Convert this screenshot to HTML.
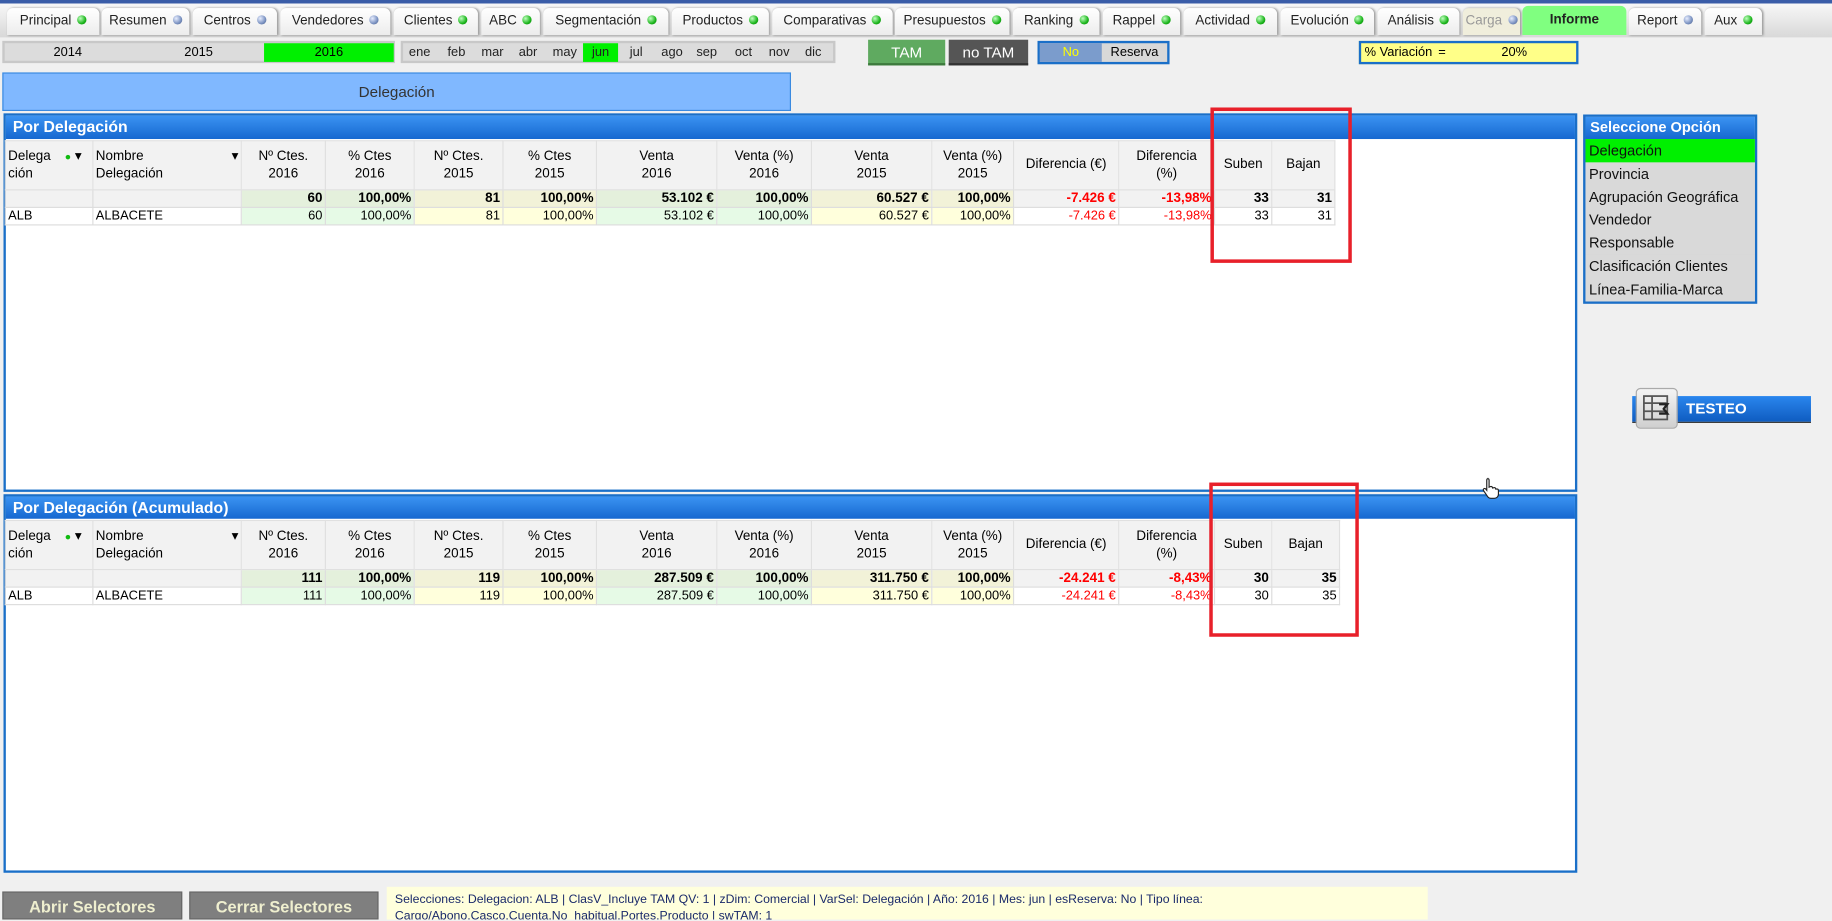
<!DOCTYPE html>
<html><head><meta charset="utf-8"><style>
html,body{margin:0;padding:0;width:1832px;height:919px;overflow:hidden;background:#f0f0f0}
#w{position:absolute;left:0;top:0;width:1568px;height:787px;transform:scale(1.16837);transform-origin:0 0;font-family:"Liberation Sans",sans-serif;font-size:11.5px;color:#000}
.a{position:absolute;box-sizing:border-box}
.tab{position:absolute;top:7px;height:23px;background:linear-gradient(#fff,#ececec);border-radius:5px 5px 0 0;box-shadow:1px 0 2px #999;font-size:11.5px;line-height:22px;text-align:center;color:#222;white-space:nowrap}
.dot{display:inline-block;width:8px;height:8px;border-radius:50%;background:radial-gradient(circle at 35% 35%,#bfffbf,#1bb51b 60%,#0a7a0a);margin-left:5px;vertical-align:-0px}
.dot.b{background:radial-gradient(circle at 35% 35%,#e8eeff,#7890c0 60%,#4a5a80)}
.hdr{position:absolute;background:linear-gradient(#3b93f2,#1668d0);color:#fff;font-weight:bold;font-size:13.5px;line-height:19px;padding-left:6px;box-sizing:border-box}
table{border-collapse:collapse;position:absolute;table-layout:fixed}
td{border:1px solid #ddd;padding:0 2px;font-size:11.5px;white-space:nowrap;overflow:hidden}
.th td{background:#f2f2f2;text-align:center;height:41px;line-height:15px;border-color:#e0e0e0}
.th td.l{text-align:left}
.tot td{height:14px;font-weight:bold;text-align:right;background:#f2f2f2}
.row td{height:14px;text-align:right;background:#fff;font-size:11px}
.tot .g{background:#e4f0dc}.tot .y{background:#f2f2d8}
.row .g{background:#e6fae6}.row .y{background:#ffffdc}
.r{color:#f00}
.red{position:absolute;border:3px solid #e8202a;box-sizing:border-box}
.opt{height:19.8px;line-height:20px;padding-left:3px;font-size:12.5px;background:#d9d9d9;color:#111;white-space:nowrap}
.mo{position:absolute;top:0;line-height:16px;font-size:11px;color:#222}
</style></head><body><div id="w">
<div class="a" style="left:0;top:0;width:1568px;height:3px;background:#3a5da8"></div>
<div class="a" style="left:0;top:3px;width:1568px;height:29px;background:linear-gradient(#f8f8f8,#d8d8d8)"></div>
<div class="tab" style="left:6px;width:79px">Principal<span class="dot"></span></div>
<div class="tab" style="left:87px;width:75px">Resumen<span class="dot b"></span></div>
<div class="tab" style="left:165px;width:72px">Centros<span class="dot b"></span></div>
<div class="tab" style="left:240px;width:94px">Vendedores<span class="dot b"></span></div>
<div class="tab" style="left:337px;width:72px">Clientes<span class="dot"></span></div>
<div class="tab" style="left:412px;width:50px">ABC<span class="dot"></span></div>
<div class="tab" style="left:465px;width:107px">Segmentación<span class="dot"></span></div>
<div class="tab" style="left:575px;width:83px">Productos<span class="dot"></span></div>
<div class="tab" style="left:661px;width:103px">Comparativas<span class="dot"></span></div>
<div class="tab" style="left:766px;width:98px">Presupuestos<span class="dot"></span></div>
<div class="tab" style="left:867px;width:74px">Ranking<span class="dot"></span></div>
<div class="tab" style="left:944px;width:66px">Rappel<span class="dot"></span></div>
<div class="tab" style="left:1013px;width:80px">Actividad<span class="dot"></span></div>
<div class="tab" style="left:1096px;width:80px">Evolución<span class="dot"></span></div>
<div class="tab" style="left:1179px;width:70px">Análisis<span class="dot"></span></div>
<div class="tab" style="left:1252px;width:49px;background:#f0eedc;color:#999">Carga<span class="dot b"></span></div>
<div class="tab" style="left:1303px;width:89px;top:5px;height:25px;background:#80ff80;box-shadow:none;font-weight:bold;line-height:24px">Informe</div>
<div class="tab" style="left:1394px;width:62px">Report<span class="dot b"></span></div>
<div class="tab" style="left:1459px;width:49px">Aux<span class="dot"></span></div>

<div class="a" style="left:2px;top:35px;width:336px;height:19px;background:#dcdcdc;border:2px solid #c8c8c8"></div>
<div class="a" style="left:2px;top:37px;width:112px;line-height:16px;text-align:center;font-size:11px">2014</div>
<div class="a" style="left:114px;top:37px;width:112px;line-height:16px;text-align:center;font-size:11px">2015</div>
<div class="a" style="left:226px;top:37px;width:111px;height:16px;line-height:16px;text-align:center;font-size:11px;background:#00f000">2016</div>
<div class="a" style="left:343px;top:35px;width:372px;height:19px;background:#dcdcdc;border:2px solid #c8c8c8">
<span class="mo" style="left:5px">ene</span><span class="mo" style="left:38px">feb</span><span class="mo" style="left:67px">mar</span><span class="mo" style="left:99px">abr</span><span class="mo" style="left:128px">may</span><span class="mo" style="left:154px;width:30px;height:16px;background:#00f000;text-align:center">jun</span><span class="mo" style="left:194px">jul</span><span class="mo" style="left:221px">ago</span><span class="mo" style="left:251px">sep</span><span class="mo" style="left:284px">oct</span><span class="mo" style="left:313px">nov</span><span class="mo" style="left:344px">dic</span></div>
<div class="a" style="left:743px;top:34px;width:66px;height:22px;background:#5faa60;color:#fff;text-align:center;line-height:21px;font-size:13px;border-bottom:2px solid #3d7a3d">TAM</div>
<div class="a" style="left:812px;top:34px;width:68px;height:22px;background:#555;color:#fff;text-align:center;line-height:21px;font-size:13px;border-bottom:2px solid #333">no TAM</div>
<div class="a" style="left:888px;top:35px;width:113px;height:20px;border:2px solid #1a6fc8;background:#d8d8d8"></div>
<div class="a" style="left:890px;top:37px;width:53px;height:16px;background:#7b9ccc;color:#ff0;text-align:center;line-height:16px;font-size:11px">No</div>
<div class="a" style="left:943px;top:37px;width:56px;line-height:16px;text-align:center;font-size:11px">Reserva</div>
<div class="a" style="left:1163px;top:35px;width:188px;height:20px;border:2px solid #1a6fc8;background:#ffff88;font-size:11px;line-height:16px;padding-left:3px">% Variación<span style="position:absolute;left:66px">=</span><span style="position:absolute;left:120px">20%</span></div>

<div class="a" style="left:2px;top:62px;width:675px;height:33px;background:#80b8ff;border:1px solid #3a8ae0;text-align:center;line-height:31px;font-size:13px;color:#333">Delegación</div>

<!-- panel 1 -->
<div class="a" style="left:3px;top:97px;width:1347px;height:324px;border:2px solid #1a6fc8;background:#fff"></div>
<div class="hdr" style="left:5px;top:99px;width:1343px;height:20px">Por Delegación</div>
<table style="left:4px;top:120px;width:1138px">
<colgroup><col style="width:75px"><col style="width:127px"><col style="width:72px"><col style="width:76px"><col style="width:76px"><col style="width:80px"><col style="width:103px"><col style="width:81px"><col style="width:103px"><col style="width:70px"><col style="width:90px"><col style="width:82px"><col style="width:49px"><col style="width:54px"></colgroup>
<tr class="th"><td class="l">Delega<span style="color:#1b1;font-size:9px;margin-left:12px">●</span> ▾<br>ción</td><td class="l">Nombre<span style="float:right">▾</span><br>Delegación</td><td>Nº Ctes.<br>2016</td><td>% Ctes<br>2016</td><td>Nº Ctes.<br>2015</td><td>% Ctes<br>2015</td><td>Venta<br>2016</td><td>Venta (%)<br>2016</td><td>Venta<br>2015</td><td>Venta (%)<br>2015</td><td>Diferencia (€)</td><td>Diferencia<br>(%)</td><td>Suben</td><td>Bajan</td></tr>
<tr class="tot"><td></td><td></td><td class="g">60</td><td class="g">100,00%</td><td class="y">81</td><td class="y">100,00%</td><td class="g">53.102 €</td><td class="g">100,00%</td><td class="y">60.527 €</td><td class="y">100,00%</td><td class="r">-7.426 €</td><td class="r">-13,98%</td><td>33</td><td>31</td></tr>
<tr class="row"><td style="text-align:left">ALB</td><td style="text-align:left">ALBACETE</td><td class="g">60</td><td class="g">100,00%</td><td class="y">81</td><td class="y">100,00%</td><td class="g">53.102 €</td><td class="g">100,00%</td><td class="y">60.527 €</td><td class="y">100,00%</td><td class="r">-7.426 €</td><td class="r">-13,98%</td><td>33</td><td>31</td></tr>
</table>
<div class="red" style="left:1036px;top:92px;width:121px;height:133px"></div>

<!-- panel 2 -->
<div class="a" style="left:3px;top:423px;width:1347px;height:324px;border:2px solid #1a6fc8;background:#fff"></div>
<div class="hdr" style="left:5px;top:425px;width:1343px;height:19px">Por Delegación (Acumulado)</div>
<table style="left:4px;top:445px;width:1142px">
<colgroup><col style="width:75px"><col style="width:127px"><col style="width:72px"><col style="width:76px"><col style="width:76px"><col style="width:80px"><col style="width:103px"><col style="width:81px"><col style="width:103px"><col style="width:70px"><col style="width:90px"><col style="width:82px"><col style="width:49px"><col style="width:58px"></colgroup>
<tr class="th"><td class="l">Delega<span style="color:#1b1;font-size:9px;margin-left:12px">●</span> ▾<br>ción</td><td class="l">Nombre<span style="float:right">▾</span><br>Delegación</td><td>Nº Ctes.<br>2016</td><td>% Ctes<br>2016</td><td>Nº Ctes.<br>2015</td><td>% Ctes<br>2015</td><td>Venta<br>2016</td><td>Venta (%)<br>2016</td><td>Venta<br>2015</td><td>Venta (%)<br>2015</td><td>Diferencia (€)</td><td>Diferencia<br>(%)</td><td>Suben</td><td>Bajan</td></tr>
<tr class="tot"><td></td><td></td><td class="g">111</td><td class="g">100,00%</td><td class="y">119</td><td class="y">100,00%</td><td class="g">287.509 €</td><td class="g">100,00%</td><td class="y">311.750 €</td><td class="y">100,00%</td><td class="r">-24.241 €</td><td class="r">-8,43%</td><td>30</td><td>35</td></tr>
<tr class="row"><td style="text-align:left">ALB</td><td style="text-align:left">ALBACETE</td><td class="g">111</td><td class="g">100,00%</td><td class="y">119</td><td class="y">100,00%</td><td class="g">287.509 €</td><td class="g">100,00%</td><td class="y">311.750 €</td><td class="y">100,00%</td><td class="r">-24.241 €</td><td class="r">-8,43%</td><td>30</td><td>35</td></tr>
</table>
<div class="red" style="left:1035px;top:413px;width:128px;height:132px"></div>

<!-- right list -->
<div class="a" style="left:1355px;top:98px;width:149px;border:2px solid #1a6fc8;background:#d9d9d9">
<div style="height:19px;background:linear-gradient(#3b93f2,#1668d0);color:#fff;font-weight:bold;font-size:12.5px;line-height:19px;padding-left:4px">Seleccione Opción</div>
<div class="opt" style="background:#00f000">Delegación</div><div class="opt">Provincia</div><div class="opt">Agrupación Geográfica</div><div class="opt">Vendedor</div><div class="opt">Responsable</div><div class="opt">Clasificación Clientes</div><div class="opt">Línea-Familia-Marca</div></div>

<div class="a" style="left:1397px;top:339px;width:153px;height:23px;background:linear-gradient(#2a86ee,#0f5cc0);border-bottom:1px solid #333;color:#fff;font-weight:bold;font-size:13px;line-height:22px;padding-left:46px">TESTEO</div>
<div class="a" style="left:1400px;top:332px;width:36px;height:35px;background:linear-gradient(#f4f4f4,#cfcfcf);border:1px solid #aaa;border-radius:4px">
<svg width="34" height="33" viewBox="0 0 34 33"><g fill="none" stroke="#555" stroke-width="1.5"><rect x="6" y="6" width="20" height="20"/><path d="M6 12H26M6 19H26M13 6V26"/></g><path d="M19 13h7l-3 4 3 4h-7" fill="none" stroke="#222" stroke-width="2"/></svg></div>
<svg class="a" style="left:1268px;top:408px" width="16" height="20" viewBox="0 0 16 20"><path d="M5 1.5c1 0 1.5.6 1.5 1.5v6l1-.5c.8-.3 1.6 0 1.8.6l.2.6 1-.3c.8-.2 1.5.2 1.6.8l.1.4.8-.1c.9 0 1.5.6 1.5 1.4V15c0 2-1.5 3.5-3.5 3.5H8c-1.2 0-2-.5-2.7-1.4L1.8 12c-.5-.7-.3-1.5.4-1.8.6-.3 1.2 0 1.5.4l.8 1V3c0-1 .5-1.5 1.5-1.5z" fill="#fff" stroke="#222" stroke-width="1"/></svg>

<!-- bottom -->
<div class="a" style="left:2px;top:763px;width:154px;height:24px;background:#7f7f7f;border:1px solid #666;color:#efefcf;font-weight:bold;font-size:14px;text-align:center;line-height:24px">Abrir Selectores</div>
<div class="a" style="left:162px;top:763px;width:162px;height:24px;background:#7f7f7f;border:1px solid #666;color:#efefcf;font-weight:bold;font-size:14px;text-align:center;line-height:24px">Cerrar Selectores</div>
<div class="a" style="left:331px;top:759px;width:891px;height:28px;background:#ffffdc;color:#1a2a6a;font-size:10.5px;line-height:14px;padding:4px 0 0 7px;overflow:hidden">Selecciones: Delegacion: ALB | ClasV_Incluye TAM QV: 1 | zDim: Comercial | VarSel: Delegación | Año: 2016 | Mes: jun | esReserva: No | Tipo línea:<br>Cargo/Abono,Casco,Cuenta,No_habitual,Portes,Producto | swTAM: 1</div>
</div></body></html>
